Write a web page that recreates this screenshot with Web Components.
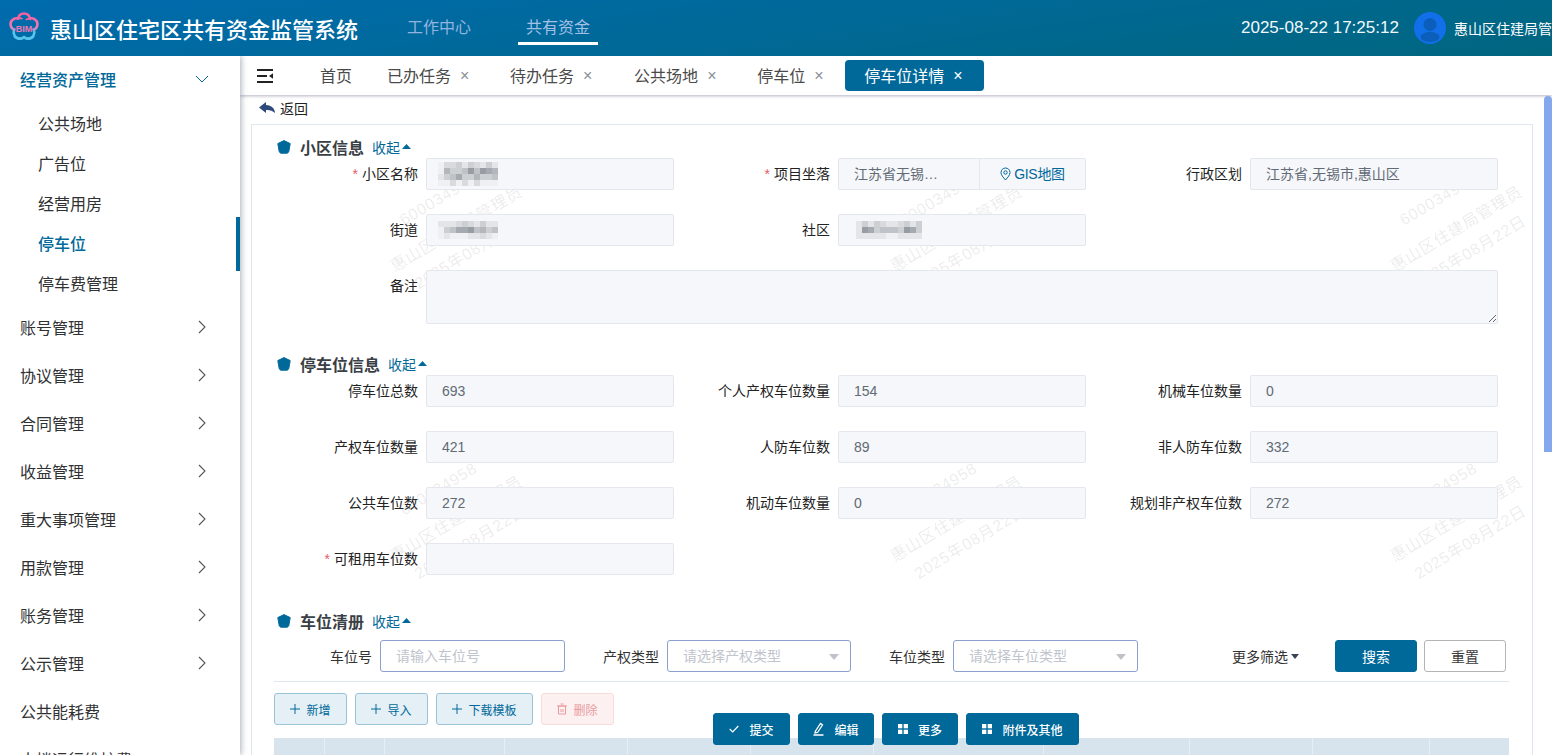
<!DOCTYPE html>
<html lang="zh-CN"><head><meta charset="utf-8"><title>惠山区住宅区共有资金监管系统</title>
<style>
html,body{margin:0;height:100%;overflow:hidden;background:#fff;font-family:"Liberation Sans","Noto Sans CJK SC",sans-serif;font-size:14px;color:#303133}
</style></head><body>
<x-app></x-app>
<script>
const chev=(d)=>d==='down'
 ?'<svg width="14" height="8" viewBox="0 0 14 8" fill="none" stroke="currentColor" stroke-width="1"><path d="M1 1l6 6 6-6"/></svg>'
 :'<svg width="8" height="14" viewBox="0 0 8 14" fill="none" stroke="currentColor" stroke-width="1.1"><path d="M1 1l6 6-6 6"/></svg>';
function def(name,css,html){
  class C extends HTMLElement{
    constructor(){super();const s=this.attachShadow({mode:'open'});
      s.innerHTML='<style>'+css+'</style>'+(typeof html==='function'?html(this):html);}
  }
  customElements.define(name,C);
}
/* ---------- header ---------- */
def('x-header',`
:host{display:flex;align-items:center;height:56px;flex:none;background:linear-gradient(172deg,#006bae 0%,#00667f 100%);color:#fff;position:relative;z-index:3}
.logo{margin-left:9px;width:30px;height:32px;flex:none;display:block}
h1{margin:0 0 0 11px;font:500 22px/1 "Noto Sans CJK SC",sans-serif;width:307px;white-space:nowrap;letter-spacing:0}
nav{display:flex;margin-left:50px;gap:47px;height:56px}
a{position:relative;display:block;font-size:16px;line-height:56px;color:#93b4df;padding:0}
a.on{margin-left:8px;color:#a3c0e6}
a.on::after{content:"";position:absolute;left:-8px;right:-8px;top:42px;height:3px;background:#fff}
.r{margin-left:auto;display:flex;align-items:center;width:311px;flex:none;overflow:hidden}
.t{font-size:17px;white-space:nowrap;width:173px;flex:none;color:#f2f8fb}
.n{font-size:14px;white-space:nowrap;margin-left:8px}
`,`
<svg class="logo" viewBox="0 0 30 32"><defs><linearGradient id="g" x1="0" y1="0" x2="0" y2="1"><stop offset="0" stop-color="#f0609f"/><stop offset=".55" stop-color="#ec7cb8"/><stop offset=".75" stop-color="#55c4ea"/><stop offset="1" stop-color="#55c4ea"/></linearGradient></defs>
<path d="M15 1.500c3.600 0 5.600 2.400 5.800 5 3.600-.8 7.400 1.300 7.600 5.200.2 3-1.600 5.100-3.700 5.900 1.400 3.200.1 7.200-3.200 8.600-2.200 1-4.600.5-6.500-1-1.900 1.500-4.300 2-6.500 1-3.300-1.400-4.600-5.400-3.200-8.600-2.100-.8-3.900-2.900-3.700-5.900.2-3.900 4-6 7.600-5.200.2-2.600 2.200-5 5.800-5z" fill="none" stroke="url(#g)" stroke-width="2.600"/>
<path d="M8 7.500c2-2 4-1.500 5.500-.5M22 8c-2-1.600-4-1-5.200 0" fill="none" stroke="#f0609f" stroke-width="1.600"/>
<path d="M5 24c3 3.400 6.500 3 10 1.200 3.500 1.800 7 2.200 10-1.200" fill="none" stroke="#55c4ea" stroke-width="2.400"/>
<text x="15" y="19.500" text-anchor="middle" font-family="Liberation Sans" font-weight="700" font-size="9" fill="#ec78b4">BIM</text></svg>
<h1>惠山区住宅区共有资金监管系统</h1>
<nav><a>工作中心</a><a class="on">共有资金</a></nav>
<div class="r"><span class="t">2025-08-22 17:25:12</span>
<svg width="32" height="32" viewBox="0 0 32 32" style="flex:none"><circle cx="16" cy="16" r="16" fill="#116fe9"/><circle cx="16" cy="12.500" r="6.500" fill="#0a5aa9" opacity=".75"/><ellipse cx="16" cy="25" rx="9.500" ry="5" fill="#0a5aa9" opacity=".75"/></svg>
<span class="n">惠山区住建局管理员</span></div>`);
/* ---------- sidebar ---------- */
def('x-side',`
:host{display:block;width:240px;flex:none;background:#fff;box-shadow:1px 0 6px rgba(60,70,90,.45);position:relative;z-index:2;overflow:hidden;font-size:16px;color:#303133}
.p{display:flex;align-items:center;height:48px;padding:0 34px 0 20px;justify-content:space-between;white-space:nowrap}
.p svg{color:#555}
.p.open{font-weight:500;color:#00699a;margin-top:-1px;padding-right:32px}
.p.open svg{color:#00699a;margin-right:-1px}
.s{display:flex;align-items:center;height:40px;padding-left:38px;position:relative}
.s.on{color:#00699a;font-weight:500}
.s.on::after{content:"";position:absolute;right:0;top:-6px;bottom:-8px;width:4px;background:#00699a}
`,()=>{
 const ps=['账号管理','协议管理','合同管理','收益管理','重大事项管理','用款管理','账务管理','公示管理'];
 return `<div class="p open"><span>经营资产管理</span>${chev('down')}</div>
 <div class="subs"><div class="s">公共场地</div><div class="s">广告位</div><div class="s">经营用房</div><div class="s on">停车位</div><div class="s">停车费管理</div></div>`
 +ps.map(p=>`<div class="p"><span>${p}</span>${chev('r')}</div>`).join('')
 +`<div class="p"><span>公共能耗费</span></div><div class="p"><span>大楼运行维护费</span></div>`;
});
/* ---------- tabs ---------- */
def('x-tabs',`
:host{display:flex;align-items:center;height:39px;flex:none;background:#fff;box-shadow:0 1px 3px rgba(70,70,110,.4);position:relative;z-index:1;font-size:16px;color:#4a4a4a;white-space:nowrap}
svg.m{margin-left:17px;flex:none}
span{padding-bottom:2px}
.h{margin-left:47px}
.tab{display:flex;align-items:center}
.tab i{font:normal 16px/1 "Liberation Sans",sans-serif;color:#8a8f99;margin-left:9px}
.tab.a{background:#00699a;color:#fff;height:31px;border-radius:4px;padding:0 21.700px 0 19px;margin-left:21.700px}
.tab.a i{color:#fff}
.b{margin-left:35px}.c{margin-left:40.700px}.d{margin-left:41.700px}.e{margin-left:40.700px}
`,`
<svg class="m" width="16" height="14" viewBox="0 0 16 14" fill="#222"><rect y="0" width="16" height="2"/><rect y="6" width="10" height="2"/><rect y="12" width="16" height="2"/><path d="M16 4.200v5.600L12 7z"/></svg>
<span class="h">首页</span>
<div class="tab b"><span>已办任务</span><i>×</i></div>
<div class="tab c"><span>待办任务</span><i>×</i></div>
<div class="tab d"><span>公共场地</span><i>×</i></div>
<div class="tab e"><span>停车位</span><i>×</i></div>
<div class="tab a"><span>停车位详情</span><i>×</i></div>`);
/* ---------- primitives ---------- */
def('x-mosaic',`
:host{display:grid;grid-auto-flow:column;grid-auto-columns:6px;width:max-content}
b{display:block}
`,(el)=>{
  const cols=+el.getAttribute('cols')||10, rows=+el.getAttribute('rows')||3, seed=+el.getAttribute('seed')||1;let x=seed*97,o='';
  const pal=['#eef0f3','#e3e5e8','#d8dade','#cdd0d3','#bfc2c6','#b3b6bb','#a5a9b0','#989da4'];
  for(let c=0;c<cols;c++)for(let r=0;r<rows;r++){
    x=(x*73+41)%211;
    const mid=rows===4?(r===1||r===2):r===1;
    let col=mid?pal[3+x%5]:(r===0?pal[1+x%3]:pal[x%3]);
    if(c===0)col=pal[x%2];
    o+=`<b style="background:${col}"></b>`;
  }
  return `<style>:host{grid-template-rows:repeat(${rows},6px);margin-left:${el.getAttribute('ml')||0}px}</style>`+o;
});
def('x-field',`
:host{display:grid;grid-template-columns:1fr 248px;column-gap:8px;align-items:start;font-size:14px;color:#222}
:host([wide]){grid-column:1/-1;grid-template-columns:156px 1fr}
label{display:block;text-align:right;line-height:32px;white-space:nowrap}
label .r{color:#e0606a;margin-right:4px}
.v{height:32px;box-sizing:border-box;background:#f5f7fa;border:1px solid #e4e7ed;border-radius:2px;padding:0 15px;line-height:30px;color:#626a75;white-space:nowrap;position:relative;z-index:1;display:flex;align-items:center}
textarea{display:block;width:100%;height:54px;box-sizing:border-box;background:#f5f7fa;border:1px solid #e4e7ed;border-radius:2px;resize:vertical;margin:0;position:relative;z-index:1}
`,(el)=>{
  const l=el.getAttribute('label'),req=el.hasAttribute('req');
  const body=el.hasAttribute('wide')?'<textarea disabled></textarea>':'<div class="v"><slot></slot></div>';
  return `<label>${req?'<span class="r">*</span>':''}${l}</label>${body}`;
});
def('x-pick',`
:host{display:grid;grid-template-columns:1fr 248px;column-gap:8px;font-size:14px;color:#222}
label{display:block;text-align:right;line-height:32px;white-space:nowrap}
.r{color:#e0606a;margin-right:4px}
.w{display:flex;height:32px;box-sizing:border-box;background:#f5f7fa;border:1px solid #e4e7ed;border-radius:2px;position:relative;z-index:1;line-height:30px}
.a{width:141px;box-sizing:border-box;padding-left:15px;color:#626a75;white-space:nowrap;border-right:1px solid #e4e7ed}
.b{flex:1;color:#00699a;display:flex;align-items:center;justify-content:center;gap:3px;white-space:nowrap;letter-spacing:-.3px}
`,`<label><span class="r">*</span>项目坐落</label><div class="w"><div class="a">江苏省无锡…</div><div class="b"><svg width="11" height="14" viewBox="0 0 11 14" fill="none" stroke="#00699a"><path d="M5.500 13C3 10 1 8 1 5.500a4.500 4.500 0 019 0C10 8 8 10 5.500 13z"/><circle cx="5.500" cy="5.500" r="1.700"/></svg>GIS地图</div></div>`);
def('x-section',`
:host{display:block;position:relative}
.h{display:flex;align-items:center;height:20px;padding-left:25px}
svg{flex:none}
h3{margin:0 0 0 9px;font:700 16px/20px "Noto Sans CJK SC",sans-serif;color:#3a3f46;white-space:nowrap}
a{margin-left:8px;font-size:14px;color:#00699a;display:flex;align-items:center;gap:2px;white-space:nowrap}
a svg{margin-top:-1px}
.f{display:grid;grid-template-columns:repeat(3,412px);row-gap:24px;padding:1px 0 0 10px;width:1236px}
:host([plain]) .f{display:block;padding:0;width:auto}
`,(el)=>`<div class="h"><svg width="14" height="14" viewBox="0 0 14 14" fill="#00699a"><path d="M7 .6l6.200 3-1.400 8-1.300 1.600H3.500L2.200 11.600.8 3.600z" stroke="#00699a" stroke-width="1" stroke-linejoin="round"/></svg><h3>${el.getAttribute('title')}</h3><a>收起<svg width="9" height="5" viewBox="0 0 9 5" fill="#00699a"><path d="M4.500 0L9 5H0z"/></svg></a></div><div class="f"><slot></slot></div>`);
def('x-btn',`
:host{display:inline-flex;align-items:center;justify-content:center;height:32px;box-sizing:border-box;border-radius:3px;font-size:12px;white-space:nowrap;border:1px solid #99c3d7;background:#e5f0f6;color:#00699a;gap:6px}
:host([kind=primary]){background:#00699a;border-color:#00699a;color:#fff;font-size:14px}
:host([kind=plain]){background:#fff;border-color:#b4b4b4;color:#3a3a3a;font-size:14px}
:host([kind=danger]){background:#fdf0f0;border-color:#f8dcdc;color:#e99aa0}
:host([kind=float]){background:#00699a;border-color:#00699a;color:#fff;font-size:12px;font-weight:500;gap:10px}
svg{display:block;flex:none}
`,(el)=>{
 const ic={plus:'<svg width="10" height="10" viewBox="0 0 10 10" stroke="currentColor" fill="none"><path d="M5 0v10M0 5h10"/></svg>',
 trash:'<svg width="10" height="12" viewBox="0 0 10 12" stroke="currentColor" fill="none"><path d="M1.500 3h7v8h-7zM0 3h10M3.500 1h3M4 6v3M6 6v3"/></svg>',
 check:'<svg width="10" height="8" viewBox="0 0 10 8" stroke="currentColor" fill="none" stroke-width="1.200"><path d="M.7 4l3 3L9.300 1"/></svg>',
 pen:'<svg width="11" height="14" viewBox="0 0 11 14" stroke="currentColor" fill="none" stroke-width="1.300"><path d="M2.500 9L7.500 1.500 9.500 3 4.500 10.500 2 11zM0.500 13h10"/></svg>',
 grid:'<svg width="10" height="10" viewBox="0 0 10 10" fill="currentColor"><rect width="4.300" height="4.300"/><rect x="5.700" width="4.300" height="4.300"/><rect y="5.700" width="4.300" height="4.300"/><rect x="5.700" y="5.700" width="4.300" height="4.300"/></svg>'};
 return (ic[el.getAttribute('icon')]||'')+'<slot></slot>';
});
def('x-filter',`
:host{display:flex;align-items:center;height:32px;margin-top:9px;font-size:14px;color:#333;white-space:nowrap}
.l{text-align:right;flex:none}
.i{height:32px;box-sizing:border-box;border:1px solid #8ca0cd;border-radius:3px;background:#fff;padding-left:15px;color:#c0c4cc;line-height:30px;flex:none;position:relative}
.i i{position:absolute;right:11px;top:13px;border:5px solid transparent;border-top:6px solid #bfc3c9;border-bottom:0}
.more{margin-left:94px;width:103px;flex:none;display:flex;align-items:center;gap:3px;font-size:14px}
.more i{border:4.500px solid transparent;border-top:5px solid #3c4353;border-bottom:0}
x-btn{width:82px}
`,`<span class="l" style="width:120px">车位号</span><div class="i" style="width:185px;margin-left:8px">请输入车位号</div>
<span class="l" style="width:94px">产权类型</span><div class="i" style="width:184px;margin-left:8px">请选择产权类型<i></i></div>
<span class="l" style="width:94px">车位类型</span><div class="i" style="width:185px;margin-left:8px">请选择车位类型<i></i></div>
<div class="more">更多筛选<i></i></div><x-btn kind="primary">搜索</x-btn><x-btn kind="plain" style="margin-left:7px">重置</x-btn>`);
def('x-grid-head',`
:host{display:grid;grid-template-columns:51px 60px 120px 123px 123px 123px 170px 146px 123px 117px 1fr;height:60px;background:#d7e4ee;margin:13px 23px 0 22px}
i{border-right:1px solid #e6eef4;display:block}
`,'<i></i>'.repeat(10)+'<b></b>');
def('x-water',`
:host{position:absolute;left:-36px;top:-15px;display:grid;grid-template-columns:repeat(3,500px);grid-auto-rows:290px;pointer-events:none;color:rgba(60,60,60,.1);font-size:16px;z-index:0}
div{display:flex;flex-direction:column;align-items:center;justify-content:center;line-height:27px;white-space:nowrap;transform:rotate(-31deg);letter-spacing:.7px}
span:first-child{margin-bottom:8px}
`,'<div><span>600034958</span><span>惠山区住建局管理员</span><span>2025年08月22日</span></div>'.repeat(9));
/* ---------- page ---------- */
def('x-app',`
:host{display:flex;flex-direction:column;height:755px;width:1552px;overflow:hidden}
.body{display:flex;flex:1;min-height:0}
main{flex:1;min-width:0;display:flex;flex-direction:column;position:relative}
.sc{flex:1;min-height:0;position:relative;overflow:hidden}
.back{display:flex;align-items:center;height:29px;padding:0 0 3px 19px;gap:5px;font-size:14px;color:#222;position:relative;z-index:1;box-sizing:border-box}
.card{margin:0 19px 0 11px;border:1px solid #dfe6f0;border-bottom:0;position:relative;z-index:1;padding-top:12px}
.sec2{margin-top:30px}.sec3{margin-top:36px}
hr{border:0;height:1px;background:#e1e5ec;margin:9px 23px 0 22px}
.ops{display:flex;gap:8px;margin:11px 0 0 22px}
.bar{position:absolute;top:1px;width:8px;right:0;height:356px;border-radius:4px 4px 0 0;background:#84a7ee;z-index:2}
.float{position:absolute;left:473px;top:657px;display:flex;gap:8px;z-index:3}
`,`
<x-header></x-header>
<div class="body"><x-side></x-side>
<main><x-tabs></x-tabs>
<div class="sc"><x-water></x-water>
<div class="back"><svg width="16" height="12" viewBox="0 0 16 12" fill="#2d4a7c"><path d="M7 0L0 5.500 7 11V8c3.500-.3 6.500.5 9 3 0-4.500-3.500-7.500-9-8z"/></svg>返回</div>
<div class="card">
<x-section title="小区信息">
 <x-field label="小区名称" req><x-mosaic cols="10" rows="4" seed="3" ml="-4"></x-mosaic></x-field>
 <x-pick></x-pick>
 <x-field label="行政区划">江苏省,无锡市,惠山区</x-field>
 <x-field label="街道"><x-mosaic cols="10" rows="3" seed="7" ml="-4"></x-mosaic></x-field>
 <x-field label="社区" style="grid-column:span 2;grid-template-columns:156px 248px"><x-mosaic cols="11" rows="3" seed="11" ml="2"></x-mosaic></x-field>
 <x-field label="备注" wide></x-field>
</x-section>
<x-section class="sec2" title="停车位信息">
 <x-field label="停车位总数">693</x-field><x-field label="个人产权车位数量">154</x-field><x-field label="机械车位数量">0</x-field>
 <x-field label="产权车位数量">421</x-field><x-field label="人防车位数">89</x-field><x-field label="非人防车位数">332</x-field>
 <x-field label="公共车位数">272</x-field><x-field label="机动车位数量">0</x-field><x-field label="规划非产权车位数">272</x-field>
 <x-field label="可租用车位数" req></x-field>
</x-section>
<x-section class="sec3" title="车位清册" plain>
 <x-filter></x-filter><hr>
 <div class="ops"><x-btn icon="plus" style="width:73px">新增</x-btn><x-btn icon="plus" style="width:73px">导入</x-btn><x-btn icon="plus" style="width:97px">下载模板</x-btn><x-btn icon="trash" kind="danger" style="width:73px">删除</x-btn></div>
 <x-grid-head></x-grid-head>
</x-section>
</div>
<div class="bar"></div>
</div>
<div class="float"><x-btn kind="float" icon="check" style="width:77px">提交</x-btn><x-btn kind="float" icon="pen" style="width:76px">编辑</x-btn><x-btn kind="float" icon="grid" style="width:76px">更多</x-btn><x-btn kind="float" icon="grid" style="width:113px">附件及其他</x-btn></div>
</main></div>`);
</script></body></html>
